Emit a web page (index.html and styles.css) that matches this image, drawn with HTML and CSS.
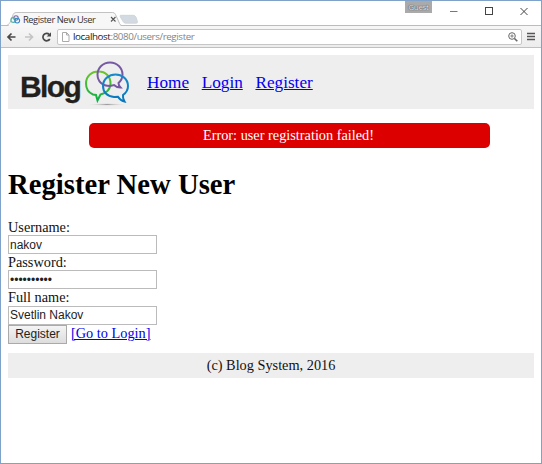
FILE: index.html
```html
<!DOCTYPE html>
<html lang="en">
<head>
<meta charset="utf-8">
<title>Register New User</title>
<link rel="stylesheet" href="styles.css">
</head>
<body>
<div class="window">
  <div class="titlebar">
    <svg class="tabs" width="150" height="16" viewBox="0 0 150 16">
      <path d="M0 15.5C3 15 3.500 12 4.500 9L7 2.500Q7.800.500 10 .500H113Q115 .500 116 2.500L120.500 13Q121.500 15 123 15V16H0Z" fill="#f7f7f7"/>
      <path d="M0 14.500C2.500 13 3.500 12 4.500 9L7 2.500Q7.800.500 10 .500H113Q115 .500 116 2.500L120.500 12.500Q121.500 14.500 123 14.500" fill="none" stroke="#bcbcbc"/>
      <path d="M121.500 3.500H135Q137 3.500 138 5.500L139.500 10Q140 12 138 12H127Q125 12 124 10L121 5Q120.500 3.500 121.500 3.500Z" fill="#d4dae1" stroke="#c8cdd4" stroke-width=".7"/>
    </svg>
    <div class="tab">
      <svg class="favicon" width="11" height="10" viewBox="0 0 11 10" fill="none" stroke-width="1.100">
        <circle cx="6" cy="3" r="2.200" stroke="#806bab"/>
        <circle cx="3.300" cy="5" r="2.400" stroke="#4cb7a0"/>
        <circle cx="7.200" cy="5.600" r="2.400" stroke="#3588c8"/>
      </svg>
      <span class="tab-title">Register New User</span>
      <svg class="tab-close" width="7" height="7" viewBox="0 0 7 7"><path d="M1 1L5.500 5.500M5.500 1L1 5.500" stroke="#555" stroke-width="1.100"/></svg>
    </div>
    <span class="guest">Guest</span>
    <svg class="controls" width="90" height="22" viewBox="0 0 90 22" fill="none" stroke="#444">
      <path d="M8 11.500H15.500" stroke="#777"/>
      <rect x="43.500" y="7.500" width="7" height="7"/>
      <path d="M78.500 8L85.500 15M85.500 8L78.500 15"/>
    </svg>
  </div>
  <div class="toolbar">
    <svg class="nav-icons" width="50" height="16" viewBox="0 0 50 16" fill="none" stroke-width="1.700">
      <path d="M14.500 8H7M10.500 4.500L7 8L10.500 11.500" stroke="#484848"/>
      <path d="M24 8H31.500M28 4.500L31.500 8L28 11.500" stroke="#c4c4c4"/>
      <path d="M48.800 10A3.700 3.700 0 1 1 48.300 5.500" stroke="#484848"/>
      <path d="M50 3.200V7.500H45.700Z" fill="#484848"/>
    </svg>
    <div class="address">
      <svg width="8" height="10" viewBox="0 0 8 10" fill="#fff" stroke="#aaa"><path d="M.500.500H4.500L7 3V9.500H.500ZM4.500.500V3H7"/></svg>
      <span class="url"><b>localhost</b>:8080/users/register</span>
      <svg width="10" height="10" viewBox="0 0 10 10" fill="none" stroke="#666"><circle cx="4" cy="4" r="3.300"/><path d="M6.500 6.500L9.300 9.300" stroke-width="1.600"/><path d="M2.300 4H5.700M4 2.300V5.700" stroke-width=".8"/></svg>
    </div>
    <svg width="8" height="9" viewBox="0 0 8 9"><path d="M0 1.500H8M0 4.500H8M0 7.500H8" stroke="#555" stroke-width="1.600"/></svg>
  </div>
  <main class="page">
    <header class="header">
      <div class="logo">
        <span class="logo-text">Blog</span>
        <svg width="46" height="46" viewBox="0 0 46 46" fill="none" stroke-width="2">
          <defs><radialGradient id="shade"><stop offset="0" stop-color="#999"/><stop offset="1" stop-color="#eee" stop-opacity="0"/></radialGradient>
          <linearGradient id="leaf" x2="0" y2="1"><stop stop-color="#70c52b"/><stop offset="1" stop-color="#0caf48"/></linearGradient>
          <linearGradient id="sky" x2="0" y2="1"><stop stop-color="#168acb"/><stop offset="1" stop-color="#0878bd"/></linearGradient></defs>
          <ellipse cx="23" cy="43.500" rx="20" ry="1.500" fill="url(#shade)"/>
          <path d="M9 33.500Q2 30.500 2 22.500C2 15 7.500 10.500 14.500 10.500S26.500 15 26.500 22.500C26.500 28.500 22 32.500 16.500 33.500L13.500 39.500L12 34Z" stroke="url(#leaf)"/>
          <path d="M26 25C18 25 13.500 20 13.500 13.500C13.500 7 19 1.500 26 1.500S38.500 7 38.500 13.500Q38.500 18.500 34.500 22Q34.500 24.500 36.500 26.500Q32.500 26.500 30 24Z" stroke="#7659a2"/>
          <path d="M30 36C23 35.500 19 31 19 25C19 18 25 13.500 31.500 13.500S44 18 44 25Q44 30.500 39 34Q38.500 37 40.500 40.500Q36 39.500 34 35.800Z" stroke="url(#sky)"/>
        </svg>
      </div>
      <nav class="nav"><a href="#">Home</a><a href="#">Login</a><a href="#">Register</a></nav>
    </header>
    <div class="error">Error: user registration failed!</div>
    <h1>Register New User</h1>
    <form>
      <label for="username">Username:</label>
      <input id="username" type="text" value="nakov">
      <label for="password">Password:</label>
      <input id="password" type="password" value="secretpass">
      <label for="fullname">Full name:</label>
      <input id="fullname" type="text" value="Svetlin Nakov">
      <div class="actions"><button type="button">Register</button><a href="#">[Go to Login]</a></div>
    </form>
    <footer>(c) Blog System, 2016</footer>
  </main>
</div>
</body>
</html>
```
FILE: styles.css
```css
* { box-sizing: border-box; }
body { margin: 0; background: #fff; overflow: hidden; }
svg { display: block; flex: none; }
a { color: #00e; text-decoration-thickness: 1px; }
.window {
  width: 542px; height: 464px;
  border: 1px solid #7fa2cb;
  font-family: "Liberation Serif", serif;
  font-size: 14.3px;
  color: #111;
}
.titlebar { position: relative; height: 25px; border-bottom: 1px solid #bcbcbc; }
.tabs { position: absolute; left: 1px; top: 11px; height: 15px; overflow: hidden; }
.tab {
  position: relative; display: flex; align-items: center;
  width: 120px; height: 15px; margin-left: 9px; top: 11px;
}
.tab-title { margin-left: 2px; width: 88px; font: 9.3px "Open Sans", sans-serif; letter-spacing: -.42px; color: #333; white-space: nowrap; }
.tab-close { margin-left: -1px; }
.guest {
  position: absolute; left: 404px; top: 0; width: 27px; height: 12px;
  background: #aaa; color: #eee; font: 8px/11px "Open Sans", sans-serif; letter-spacing: -.3px;
  text-align: center; text-shadow: 0 0 1px #333, 0 0 1px #555;
}
.controls { position: absolute; left: 441px; top: -1px; }
.toolbar {
  display: flex; align-items: center; height: 22px; padding-right: 6px;
  background: linear-gradient(#f7f7f7, #ececec); border-bottom: 1px solid #c0c0c0;
}
.nav-icons { margin-right: 6px; }
.address {
  display: flex; align-items: center; width: 465px; height: 16px; margin-right: auto;
  padding: 0 3px 0 4px; border: 1px solid #c6c6c6; border-radius: 2px; background: #fff;
}
.url { flex: 1; margin-left: 3px; font: 9.8px/14px "Open Sans", sans-serif; letter-spacing: -.4px; color: #858585; white-space: nowrap; }
.url b { font-weight: 400; color: #222; }
.page { padding: 7px 7px 0; }
.header { display: flex; height: 54px; background: #eee; }
.logo { display: flex; width: 139px; padding: 6px 0 0 12px; }
.logo-text {
  width: 64px; font: bold 30px/51px "Liberation Sans", Arial, sans-serif;
  letter-spacing: -1.6px; color: #231f1d; -webkit-text-stroke: .3px #231f1d;
}
.nav { display: flex; gap: 12.7px; font-size: 17.2px; line-height: 55px; }
.error {
  width: 401px; height: 25px; margin: 14px auto 0 81px; padding-right: 2px; border-radius: 5px;
  background: #d00; color: #fff; line-height: 25px; text-align: center;
}
h1 { margin: 20px 0 19px; font-size: 28.7px; line-height: 32px; color: #000; }
form { height: 125px; }
label { display: block; height: 16.2px; line-height: 16px; }
input {
  display: block; width: 149px; height: 19px; padding: 1px;
  border: 1px solid #bbb; font: 12px "Liberation Sans", Arial, sans-serif; color: #222;
}
.actions { display: flex; gap: 4px; line-height: 17px; }
button {
  width: 59px; height: 19px; padding: 0; border: 1px solid #aaa;
  background: linear-gradient(#f4f4f4, #ddd); font: 12px "Liberation Sans", Arial, sans-serif; color: #222;
}
footer { height: 25px; margin-top: 9px; background: #eee; line-height: 25px; text-align: center; }
```
